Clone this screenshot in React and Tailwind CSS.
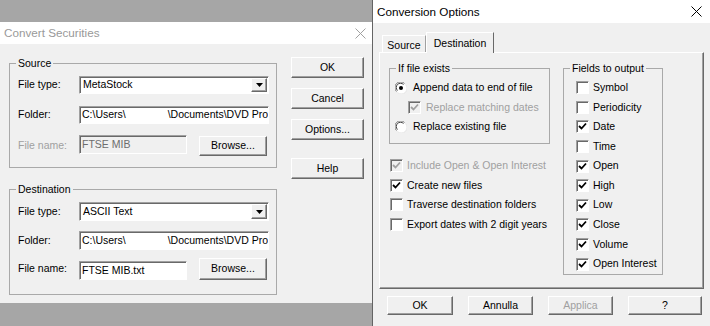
import React from 'react';

const sunken =
  'border border-t-[#a0a0a0] border-l-[#a0a0a0] border-r-white border-b-white shadow-[inset_1px_1px_0_#696969]';
const raised =
  'border border-t-white border-l-white border-r-[#696969] border-b-[#696969] shadow-[inset_-1px_-1px_0_#a0a0a0]';

function Btn({ children, className = '', disabled }) {
  return (
    <div
      className={`flex items-center justify-center bg-[#f0f0f0] ${raised} ${
        disabled ? 'text-[#a0a0a0]' : 'text-black'
      } ${className}`}
    >
      {children}
    </div>
  );
}

function Check({ checked, disabled }) {
  return (
    <span
      className={`flex items-center justify-center w-[13px] h-[13px] shrink-0 ${sunken} ${
        disabled ? 'bg-[#f0f0f0]' : 'bg-white'
      }`}
    >
      {checked && (
        <svg width="9" height="9" viewBox="0 0 9 9">
          <path
            d="M1 4 L3.5 6.5 L8 1.5"
            fill="none"
            stroke={disabled ? '#a0a0a0' : '#000'}
            strokeWidth="1.8"
          />
        </svg>
      )}
    </span>
  );
}

function Radio({ checked }) {
  return (
    <svg width="12" height="12" viewBox="0 0 12 12" className="shrink-0">
      <circle cx="6" cy="6" r="5.5" fill="#fff" />
      <path d="M1.5 9.5 A5 5 0 0 1 9.5 1.5" fill="none" stroke="#7a7a7a" strokeWidth="1" />
      <path d="M2.5 8.5 A4 4 0 0 1 8.5 2.5" fill="none" stroke="#404040" strokeWidth="1" />
      <path d="M10.5 2.5 A5 5 0 0 1 2.5 10.5" fill="none" stroke="#e8e8e8" strokeWidth="1" />
      {checked && <circle cx="6" cy="6" r="2" fill="#000" />}
    </svg>
  );
}

function CheckRow({ label, checked, disabled, className = '' }) {
  return (
    <div className={`flex items-center gap-[4px] h-[19.6px] ${className}`}>
      <Check checked={checked} disabled={disabled} />
      <span className={disabled ? 'text-[#a0a0a0]' : 'text-black'}>{label}</span>
    </div>
  );
}

function Combo({ value, className = '' }) {
  return (
    <div className={`relative flex items-center bg-white pl-[3px] ${sunken} ${className}`}>
      <span>{value}</span>
      <div className={`absolute right-[1px] top-[1px] bottom-[1px] w-[16px] flex items-center justify-center bg-[#f0f0f0] ${raised}`}>
        <svg width="7" height="4" viewBox="0 0 7 4">
          <path d="M0 0 H7 L3.5 4 Z" fill="#000" />
        </svg>
      </div>
    </div>
  );
}

function FolderField({ className = '' }) {
  return (
    <div className={`flex items-center bg-white pl-[2px] overflow-hidden whitespace-nowrap ${sunken} ${className}`}>
      <span>{'C:\\Users\\'}</span>
      <span className="inline-block w-[42px]" />
      <span>{'\\Documents\\DVD Pro'}</span>
    </div>
  );
}

function Row({ label, children, dim, className = '' }) {
  return (
    <div className={`flex items-start ${className}`}>
      <span className={`w-[61px] shrink-0 self-center ${dim ? 'text-[#a0a0a0]' : 'text-black'}`}>{label}</span>
      {children}
    </div>
  );
}

function Group({ title, children, className = '' }) {
  return (
    <fieldset className={`border border-[#a9a9a9] min-w-0 p-0 m-0 ${className}`}>
      <legend className="ml-[6px] px-[2px] leading-[12px]">{title}</legend>
      {children}
    </fieldset>
  );
}

function TitleX({ color }) {
  return (
    <svg width="11" height="11" viewBox="0 0 11 11">
      <path d="M0.5 0.5 L10.5 10.5 M10.5 0.5 L0.5 10.5" stroke={color} strokeWidth="1" />
    </svg>
  );
}

function ConvertSecurities() {
  return (
    <div className="w-[372px] mt-[22px] flex flex-col shrink-0">
      <div className="h-[22px] bg-white flex items-center justify-between pl-[4px] pr-[6px] text-[11.7px] text-[#999999]">
        <span>Convert Securities</span>
        <TitleX color="#a0a0a0" />
      </div>
      <div className="h-[259px] bg-[#f0f0f0] flex pl-[9px] pt-[13px]">
        <div className="w-[268px] flex flex-col">
          <Group title="Source">
            <div className="pl-[8px] pr-[7px] pt-[7px] pb-[11px]">
              <Row label="File type:">
                <Combo value="MetaStock" className="w-[190px] h-[18px]" />
              </Row>
              <Row label="Folder:" className="mt-[12px]">
                <FolderField className="w-[190px] h-[18px]" />
              </Row>
              <Row label="File name:" dim className="mt-[11px]">
                <div className={`w-[108px] h-[19px] flex items-center pl-[2px] bg-[#f0f0f0] text-[#6d6d6d] ${sunken}`}>
                  FTSE MIB
                </div>
                <Btn className="ml-[12px] mt-[1px] w-[68px] h-[20px]">Browse...</Btn>
              </Row>
            </div>
          </Group>
          <Group title="Destination" className="mt-[15px]">
            <div className="pl-[8px] pr-[7px] pt-[7px] pb-[14px]">
              <Row label="File type:">
                <Combo value="ASCII Text" className="w-[190px] h-[19px]" />
              </Row>
              <Row label="Folder:" className="mt-[10px]">
                <FolderField className="w-[190px] h-[19px]" />
              </Row>
              <Row label="File name:" className="mt-[8px]">
                <div className={`w-[108px] h-[19px] mt-[3px] flex items-center pl-[2px] bg-white ${sunken}`}>
                  FTSE MIB.txt
                </div>
                <Btn className="ml-[12px] w-[68px] h-[22px]">Browse...</Btn>
              </Row>
            </div>
          </Group>
        </div>
        <div className="ml-[14px] flex flex-col">
          <Btn className="w-[73px] h-[21px]">OK</Btn>
          <Btn className="w-[73px] h-[21px] mt-[10px]">Cancel</Btn>
          <Btn className="w-[73px] h-[21px] mt-[10px]">Options...</Btn>
          <Btn className="w-[73px] h-[21px] mt-[18px]">Help</Btn>
        </div>
      </div>
    </div>
  );
}

function ConversionOptions() {
  const fields = [
    ['Symbol', false],
    ['Periodicity', false],
    ['Date', true],
    ['Time', false],
    ['Open', true],
    ['High', true],
    ['Low', true],
    ['Close', true],
    ['Volume', true],
    ['Open Interest', true],
  ];
  return (
    <div className="w-[338px] h-[326px] border-l border-[#646464] flex flex-col shrink-0">
      <div className="h-[23px] bg-white flex items-center justify-between pl-[4px] pr-[8px] text-[11.7px] text-black">
        <span>Conversion Options</span>
        <TitleX color="#000" />
      </div>
      <div className="flex-1 bg-[#f0f0f0] pl-[6px]">
        <div className="h-[29px] flex items-end pl-[3px]">
          <div className={`w-[44px] h-[17px] pt-[2px] text-center border border-b-0 border-t-white border-l-white border-r-[#a0a0a0]`}>
            Source
          </div>
          <div className="relative z-10 -mb-px w-[68px] h-[21px] pt-[3px] text-center bg-[#f0f0f0] border border-b-0 border-t-white border-l-white border-r-[#696969]">
            Destination
          </div>
        </div>
        <div className={`w-[325px] h-[237px] pl-[9px] pt-[9px] flex gap-[13px] ${raised}`}>
          <div className="w-[161px] flex flex-col">
            <Group title="If file exists">
              <div className="pl-[5px] pt-[4px] pb-[6px]">
                <div className="flex items-center gap-[6px] h-[20px]">
                  <Radio checked />
                  <span>Append data to end of file</span>
                </div>
                <div className="flex items-center gap-[5px] h-[19px] pl-[13px]">
                  <Check checked disabled />
                  <span className="text-[#a0a0a0]">Replace matching dates</span>
                </div>
                <div className="flex items-center gap-[6px] h-[20px]">
                  <Radio />
                  <span>Replace existing file</span>
                </div>
              </div>
            </Group>
            <div className="mt-[12px] pl-[1px]">
              <CheckRow label="Include Open & Open Interest" checked disabled />
              <CheckRow label="Create new files" checked />
              <CheckRow label="Traverse destination folders" />
              <CheckRow label="Export dates with 2 digit years" />
            </div>
          </div>
          <Group title="Fields to output" className="w-[100px] self-start">
            <div className="pl-[12px] pt-[4px]">
              {fields.map(([l, c]) => (
                <CheckRow key={l} label={l} checked={c} className="whitespace-nowrap" />
              ))}
            </div>
          </Group>
        </div>
        <div className="flex gap-[15px] pl-[8px] mt-[7px]">
          <Btn className="w-[66px] h-[19px]">OK</Btn>
          <Btn className="w-[65px] h-[19px]">Annulla</Btn>
          <Btn className="w-[65px] h-[19px]" disabled>Applica</Btn>
          <Btn className="w-[74px] h-[19px]">?</Btn>
        </div>
      </div>
    </div>
  );
}

export default function App() {
  return (
    <div className="w-[710px] h-[326px] overflow-hidden flex items-start bg-[#a6a6a6] font-['Liberation_Sans',Arial,sans-serif] text-[10.5px] text-black">
      <ConvertSecurities />
      <ConversionOptions />
    </div>
  );
}
